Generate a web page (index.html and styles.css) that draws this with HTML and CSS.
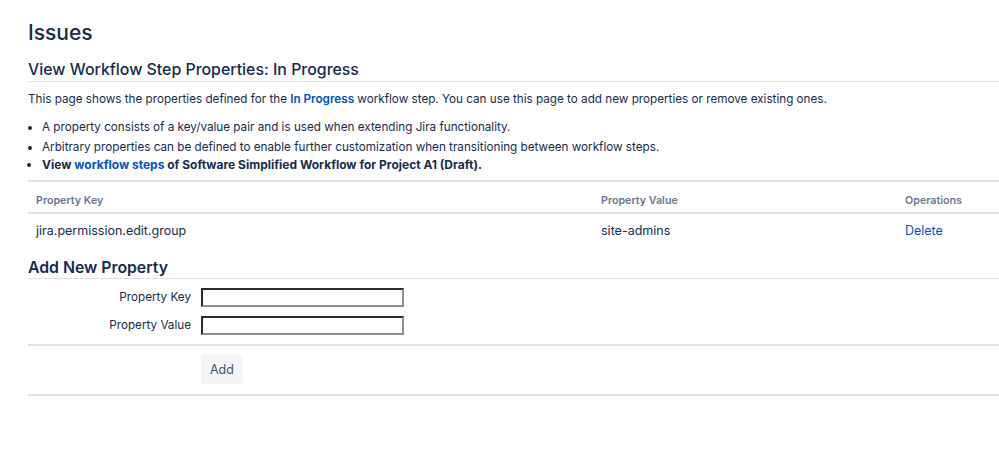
FILE: index.html
```html
<!DOCTYPE html>
<html lang="en">
<head>
<meta charset="utf-8">
<title>View Workflow Step Properties</title>
<link rel="stylesheet" href="styles.css">
</head>
<body>
<main class="page">
  <h1 class="page-title">Issues</h1>
  <h2 class="section-title">View Workflow Step Properties: In Progress</h2>
  <p class="intro">This page shows the properties defined for the <a class="link strong" href="#">In Progress</a> workflow step. You can use this page to add new properties or remove existing ones.</p>
  <ul class="notes">
    <li>A property consists of a key/value pair and is used when extending Jira functionality.</li>
    <li>Arbitrary properties can be defined to enable further customization when transitioning between workflow steps.</li>
    <li class="view-item"><strong>View <a class="link" href="#">workflow steps</a> of Software Simplified Workflow for Project A1 (Draft).</strong></li>
  </ul>
  <table class="props">
    <thead>
      <tr><th class="col-key">Property Key</th><th class="col-value">Property Value</th><th class="col-ops">Operations</th></tr>
    </thead>
    <tbody>
      <tr><td>jira.permission.edit.group</td><td>site-admins</td><td><a class="link" href="#">Delete</a></td></tr>
    </tbody>
  </table>
  <form class="add-form">
    <h3 class="form-title">Add New Property</h3>
    <div class="fields">
      <div class="field"><label class="field-label" for="k">Property Key</label><input class="text" id="k" type="text"></div>
      <div class="field"><label class="field-label" for="v">Property Value</label><input class="text" id="v" type="text"></div>
    </div>
    <div class="buttons"><button class="btn" type="button">Add</button></div>
  </form>
</main>
</body>
</html>
```

FILE: styles.css
```css
html, body {
  margin: 0;
  padding: 0;
  background: #fff;
}
body {
  font-family: Inter, "Noto Sans", "Liberation Sans", sans-serif;
  font-size: 11.7px;
  line-height: 20px;
  color: #172B4D;
  overflow: hidden;
}
.page {
  padding: 18px 0 0 28px;
}
.page-title {
  margin: 0;
  font-size: 21px;
  line-height: 29px;
  font-weight: 500;
  color: #172B4D;
}
.section-title {
  margin: 11px 0 0;
  font-size: 15.9px;
  line-height: 23px;
  font-weight: 500;
  border-bottom: 1px solid #DFE1E6;
  color: #172B4D;
}
.intro {
  margin: 7px 0 0;
}
.link {
  color: #0052CC;
  text-decoration: none;
}
.strong { font-weight: 600; }
.notes {
  margin: 8px 0 0;
  padding-left: 14px;
}
.notes li { padding-left: 0; }
.notes .view-item { line-height: 16px; font-size: 12px; }
.notes strong { font-weight: 700; }
.props {
  margin-top: 7px;
  width: 100%;
  border-collapse: collapse;
  border-top: 2px solid #DFE1E6;
}
.props th {
  text-align: left;
  font-size: 10.7px;
  line-height: 18px;
  font-weight: 600;
  color: #6B778C;
  padding: 10px 8px 2px;
  border-bottom: 2px solid #DFE1E6;
}
.props td {
  font-size: 12.5px;
  padding: 7px 8px 7px;
  vertical-align: top;
}
.col-key { width: 549px; }
.col-value { width: 288px; }
.add-form { margin: 0; }
.form-title {
  margin: 10px 0 0;
  font-size: 15.8px;
  line-height: 20px;
  font-weight: 600;
  border-bottom: 1px solid #DFE1E6;
}
.fields {
  padding: 5px 0 4px;
}
.field {
  display: flex;
  align-items: center;
  padding: 4px 0 5px;
}
.field-label {
  width: 173px;
  padding-right: 10px;
  text-align: right;
  box-sizing: border-box;
  line-height: 19px;
}
.text {
  box-sizing: border-box;
  width: 203px;
  height: 19px;
  margin: 0;
  padding: 0 2px;
  border-width: 2px;
  border-style: solid;
  border-color: #2b2b2b #8f8f8f #8f8f8f #2b2b2b;
  background: #fff;
  font: inherit;
}
.buttons {
  border-top: 2px solid #DFE1E6;
  border-bottom: 2px solid #DFE1E6;
  padding: 9px 0 10px 173px;
}
.btn {
  font: inherit;
  font-size: 12.5px;
  color: #42526E;
  background: #F4F5F7;
  border: 0;
  border-radius: 3px;
  padding: 4px 9px;
  line-height: 21px;
  height: 29px;
  margin: 0;
}
```
